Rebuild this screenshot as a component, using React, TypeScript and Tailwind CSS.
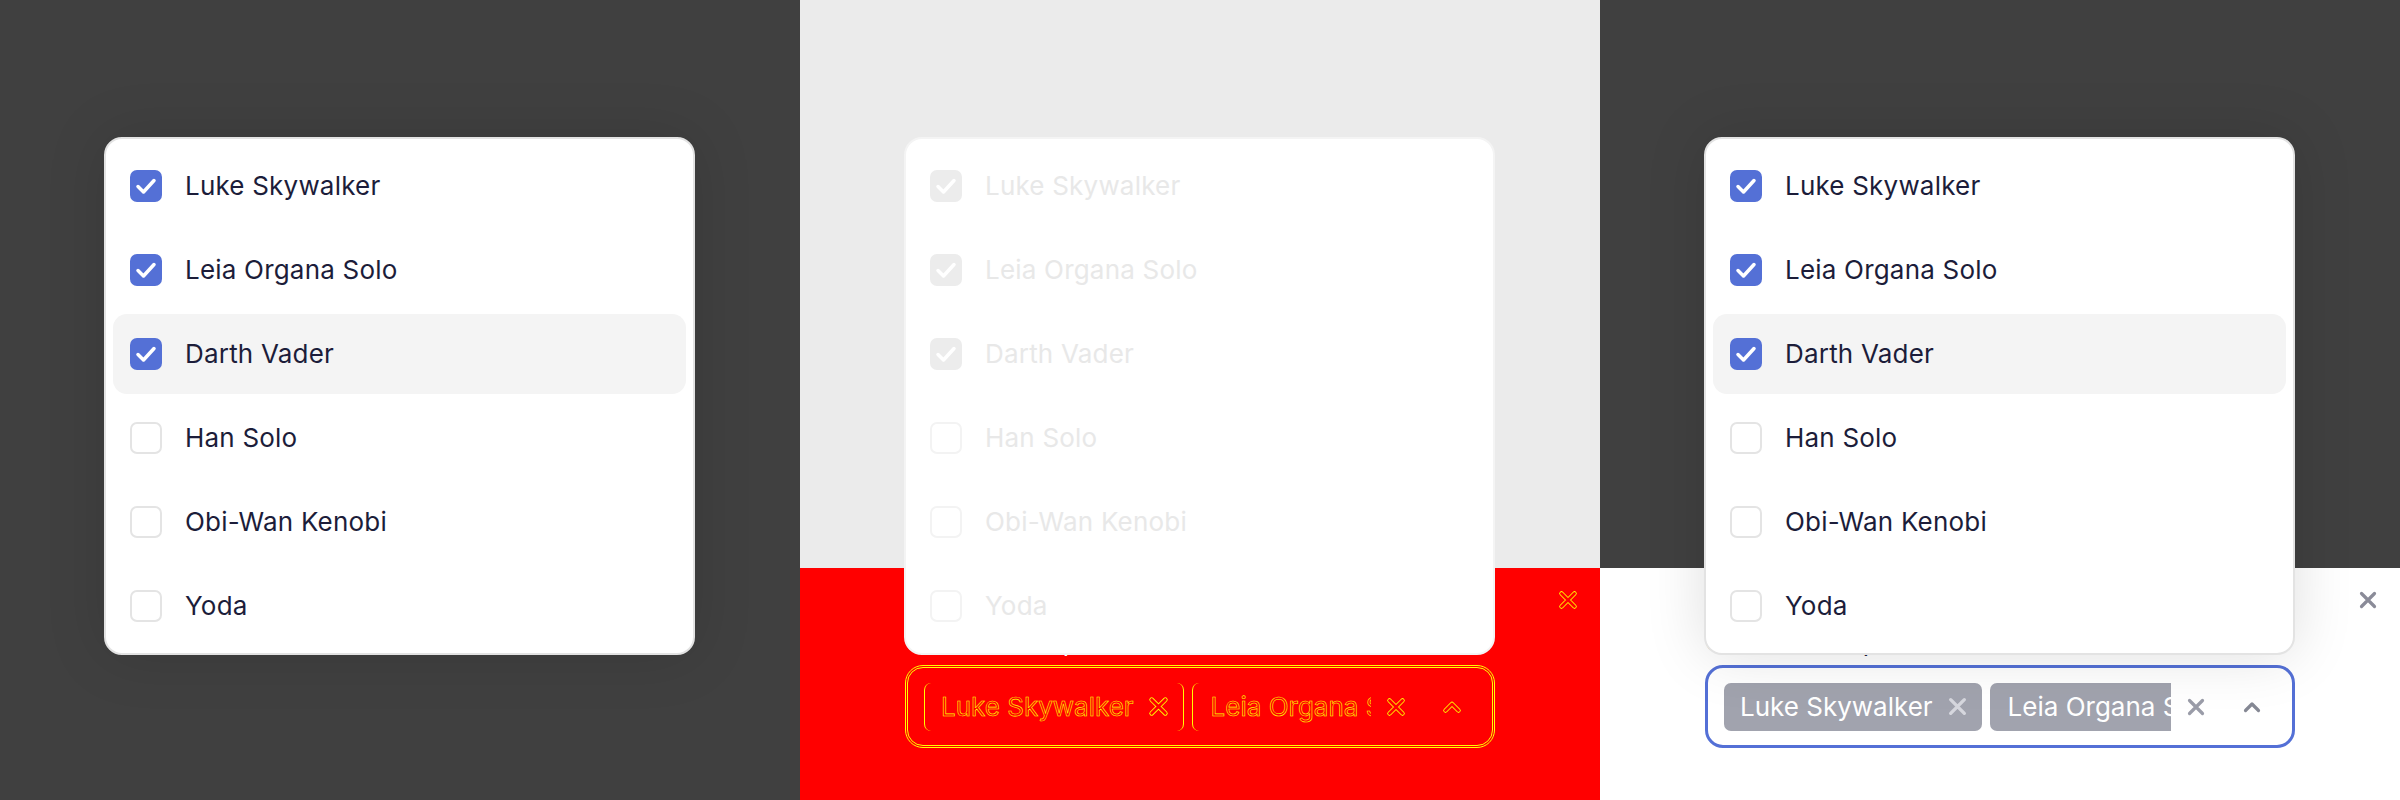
const people = [
  { name: "Luke Skywalker", checked: true },
  { name: "Leia Organa Solo", checked: true },
  { name: "Darth Vader", checked: true, active: true },
  { name: "Han Solo", checked: false },
  { name: "Obi-Wan Kenobi", checked: false },
  { name: "Yoda", checked: false },
];

type Variant = "normal" | "diff";

function XIcon({ size, color, diff }: { size: number; color: string; diff?: boolean }) {
  return (
    <svg width={size} height={size} viewBox="0 0 20 20" fill="none" className="shrink-0">
      <path d="M3.5 3.5L16.5 16.5M16.5 3.5L3.5 16.5" stroke={diff ? "#ffff00" : color} strokeWidth={diff ? 4.5 : 3.2} strokeLinecap="round" />
      {diff && <path d="M3.5 3.5L16.5 16.5M16.5 3.5L3.5 16.5" stroke="#ff0000" strokeWidth={2.8} strokeLinecap="round" />}
    </svg>
  );
}

function ChevronUp({ diff }: { diff?: boolean }) {
  return (
    <svg width={20} height={20} viewBox="0 0 20 20" fill="none" className="shrink-0">
      <path d="M3.5 13.5L10 7L16.5 13.5" stroke={diff ? "#ffff00" : "#858894"} strokeWidth={diff ? 4.5 : 3.2} strokeLinecap="round" strokeLinejoin="round" />
      {diff && <path d="M3.5 13.5L10 7L16.5 13.5" stroke="#ff0000" strokeWidth={2.8} strokeLinecap="round" strokeLinejoin="round" />}
    </svg>
  );
}

function Menu({ variant }: { variant: Variant }) {
  const diff = variant === "diff";
  return (
    <div
      className={
        "w-[591px] rounded-[18px] bg-white p-[7px] flex flex-col gap-[4px] border-2 " +
        (diff ? "border-[#f4f4f4]" : "border-[#e3e3e3] shadow-[0_0_60px_rgba(0,0,0,0.13)]")
      }
    >
      {people.map((p) => (
        <div
          key={p.name}
          className={
            "h-[80px] rounded-[14px] flex items-center pl-[17px] gap-[23px] " +
            (p.active && !diff ? "bg-[#f4f4f4]" : "")
          }
        >
          {p.checked ? (
            <div className={"w-[32px] h-[32px] rounded-[7px] flex items-center justify-center " + (diff ? "bg-[#ececec]" : "bg-[#5470d6]")}>
              <svg width={32} height={32} viewBox="0 0 32 32" fill="none">
                <path d="M8 16.5L13.5 22L24 10.5" stroke="#ffffff" strokeWidth={3.5} strokeLinecap="round" strokeLinejoin="round" />
              </svg>
            </div>
          ) : (
            <div className={"w-[32px] h-[32px] rounded-[7px] border-2 " + (diff ? "border-[#f3f3f3]" : "border-[#e4e4e4]")} />
          )}
          <span className={"text-[26px] leading-[34px] tracking-[0.2px] " + (diff ? "text-[#e8e8e8]" : "text-[#1c1d3a]")}>{p.name}</span>
        </div>
      ))}
    </div>
  );
}

function Tag({ label, diff, clip }: { label: string; diff: boolean; clip?: boolean }) {
  return (
    <div
      className={
        "h-[48px] rounded-[7px] flex items-center pr-[14px] gap-[14px] shrink-0 " +
        (diff ? "border-x border-[#ffff00]" : "bg-[#a1a3ae]") +
        (clip ? " pl-[18px]" : " pl-[16px]")
      }
    >
      <span
        className={
          "text-[26px] leading-[32px] whitespace-nowrap " +
          (diff ? "text-[#ff0000] [-webkit-text-stroke:0.6px_#ffff00]" : "text-white")
        }
      >
        {label}
      </span>
      <XIcon size={21} color="#d6d7de" diff={diff} />
    </div>
  );
}

function SelectPanel({ variant }: { variant: Variant }) {
  const diff = variant === "diff";
  return (
    <div
      className={
        "w-[800px] h-[800px] flex flex-col pt-[590px] " +
        (diff
          ? "bg-[linear-gradient(#ebebeb_0_568px,#ff0000_568px)]"
          : "bg-[linear-gradient(#404040_0_568px,#ffffff_568px)]")
      }
    >
      <div className="h-[20px] flex justify-end pr-[22px]">
        <XIcon size={20} color="#8a8b98" diff={diff} />
      </div>
      <div className="relative ml-[105px] w-[590px] mt-[16px]">
        <div className={"text-[26px] leading-[32px] " + (diff ? "text-white" : "text-[#1c1d3a]")}>Characters up to three</div>
        <div
          className={
            "mt-[7px] h-[83px] rounded-[18px] flex items-center pl-[16px] " +
            (diff ? "border-[3px] border-double border-[#ffff00]" : "border-[3px] border-[#5470d6]")
          }
        >
          <div className="w-[447px] flex gap-[8px] overflow-hidden">
            <Tag label="Luke Skywalker" diff={diff} />
            <Tag label="Leia Organa Solo" diff={diff} clip />
          </div>
          <div className="ml-[15px]">
            <XIcon size={20} color="#9a9ca8" diff={diff} />
          </div>
          <div className="ml-[36px]">
            <ChevronUp diff={diff} />
          </div>
        </div>
        <div className="absolute -left-px bottom-[93px]">
          <Menu variant={variant} />
        </div>
      </div>
    </div>
  );
}

export default function App() {
  return (
    <div className="flex w-[2400px] h-[800px] font-['Inter',sans-serif]">
      <div className="w-[800px] h-[800px] bg-[#404040] pt-[137px] pl-[104px]">
        <Menu variant="normal" />
      </div>
      <SelectPanel variant="diff" />
      <SelectPanel variant="normal" />
    </div>
  );
}
